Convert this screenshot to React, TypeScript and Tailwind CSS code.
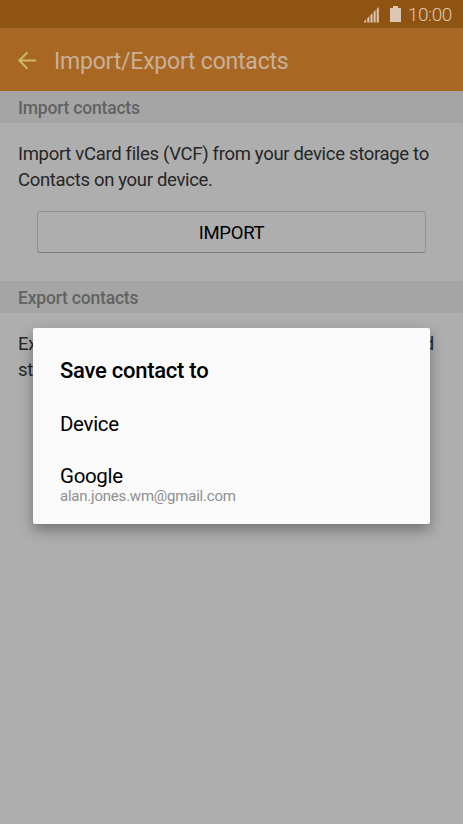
import type { ReactNode } from "react";

function StatusBar() {
  return (
    <div className="flex h-7 items-center justify-end bg-[#905412] pr-[11px] text-[#dcc7b2]">
      <svg className="relative top-px" width="17" height="16" viewBox="0 0 17 16" fill="currentColor">
        <path d="M1 15.5V14.2L3.2 12.4V15.5ZM4.3 15.5V11.2L6.3 9.2V15.5ZM7.4 15.5V8.2L9.5 6.2V15.5ZM10.6 15.5V5L12.6 3V15.5ZM13.7 15.5V2L15.8 0V15.5Z" />
      </svg>
      <svg className="ml-[10px]" width="11" height="16" viewBox="0 0 11 16" fill="currentColor">
        <path d="M3 0H8V2H11V16H0V2H3Z" />
      </svg>
      <span className="relative top-px ml-[7px] text-[19px] leading-7 font-light tracking-[-0.4px]">10:00</span>
    </div>
  );
}

function SectionHeader({ children }: { children: ReactNode }) {
  return (
    <h2 className="h-8 bg-[#a5a5a5] pl-[18px] text-[17.5px] leading-[34px] font-medium tracking-[-0.2px] text-[#626262]">
      {children}
    </h2>
  );
}

function SaveDialog() {
  return (
    <div className="absolute top-[328px] left-[33px] h-[196px] w-[397px] rounded-[2px] bg-[#fafafa] px-[27px] text-black shadow-[0_6px_14px_rgba(0,0,0,0.34)]">
      <h3 className="pt-[29px] text-[22px] leading-7 font-medium tracking-[-0.26px]">Save contact to</h3>
      <p className="mt-[25px] text-[20.5px] leading-7 tracking-[-0.33px]">Device</p>
      <p className="mt-6 text-[20.5px] leading-7 tracking-[-0.33px]">Google</p>
      <p className="-mt-[2px] text-[15px] leading-4 tracking-[-0.22px] text-[#8f8f8f]">
        alan.jones.wm@gmail.com
      </p>
    </div>
  );
}

export default function App() {
  return (
    <main className="relative h-[824px] w-[463px] overflow-hidden bg-[#aeaeae] font-['Roboto',sans-serif] text-[#262626]">
      <StatusBar />

      <header className="flex h-[63px] items-center bg-[#a86823]">
        <svg
          className="ml-[17px]"
          width="20"
          height="20"
          viewBox="0 0 20 20"
          fill="none"
          stroke="#cab866"
          strokeWidth="2"
        >
          <path d="M19 10.5H2.5M10.5 2.3L2.3 10.5L10.5 18.7" />
        </svg>
        <h1 className="ml-[17px] pt-[5px] text-[23px] leading-8 tracking-[-0.22px] text-[#c8b09a]">
          Import/Export contacts
        </h1>
      </header>

      <SectionHeader>Import contacts</SectionHeader>
      <p className="mt-[18px] pl-[18px] text-[18.5px] leading-[26px] tracking-[-0.32px]">
        Import vCard files (VCF) from your device storage to
        <br />
        Contacts on your device.
      </p>
      <button className="mt-[18px] ml-[37px] block h-[42px] w-[389px] rounded-[3px] border border-[#949494] border-b-[#7e7e7e] pt-[3px] text-[18.5px] tracking-[-0.3px] text-black">
        IMPORT
      </button>

      <div className="mt-7">
        <SectionHeader>Export contacts</SectionHeader>
      </div>
      <div className="mt-[18px] ml-[18px] w-[416px] text-[18.5px] leading-[26px] tracking-[-0.3px]">
        <p className="whitespace-nowrap [text-align-last:justify]">
          Export contacts as vCard files (VCF) to shared
        </p>
        <p>storage.</p>
      </div>

      <SaveDialog />
    </main>
  );
}
